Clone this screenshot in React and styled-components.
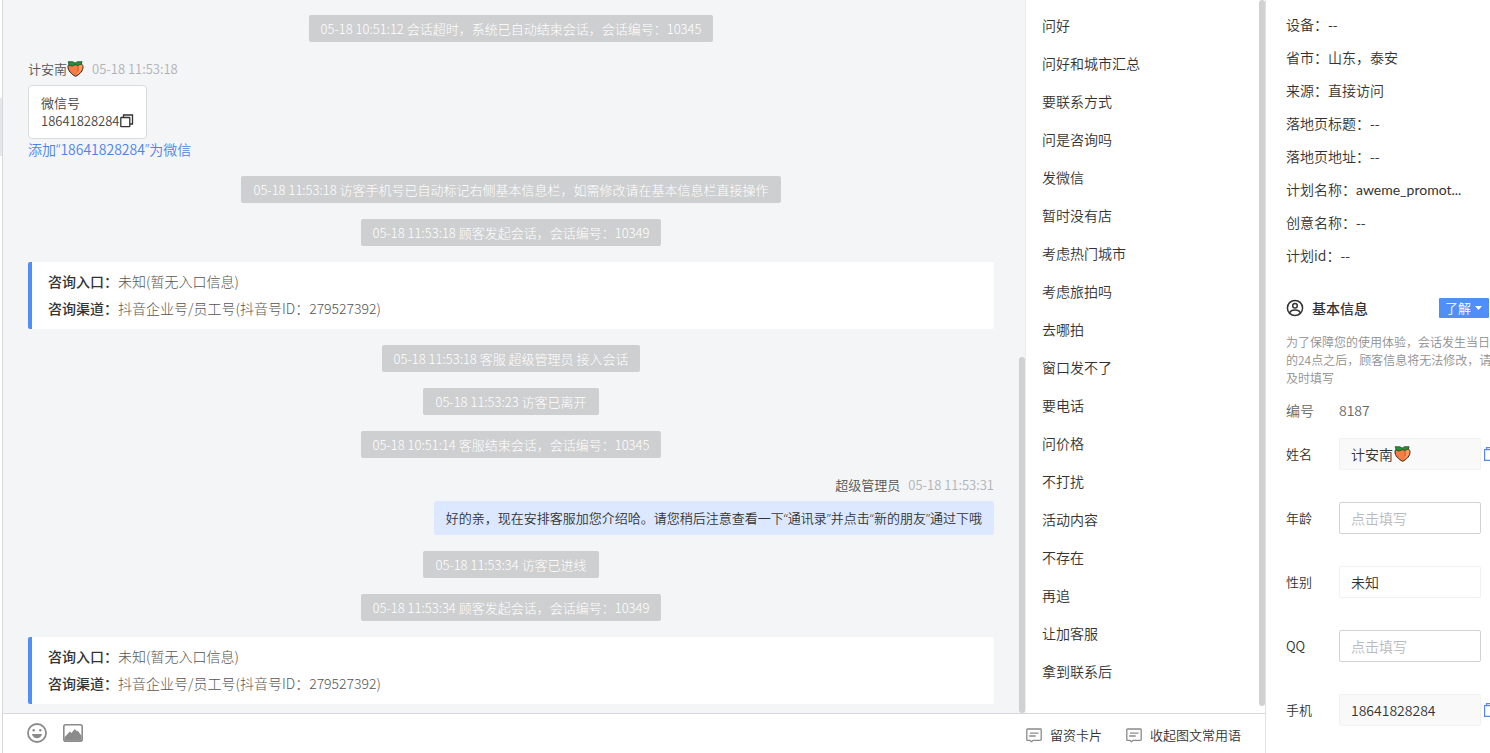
import React from 'react';
import styled, { createGlobalStyle } from 'styled-components';

const GlobalStyle = createGlobalStyle`
    * {
        box-sizing: border-box;
    }
    body {
        margin: 0;
        color: #333;
        font: 350 14px/20px "Noto Sans CJK SC", "Noto Sans", sans-serif;
        background: #fff;
    }
    button, input, select {
        margin: 0;
        padding: 0;
        border: 0;
        color: inherit;
        font: inherit;
        background: none;
    }
    svg {
        display: block;
        flex: none;
    }
`;

const Page = styled.div`
    display: flex;
    height: 100vh;
    overflow: hidden;
`;

const Edge = styled.div`
    flex: none;
    width: 3px;
    padding-top: 98px;
    border-right: 1px solid #d6d8dc;
`;

const EdgeThumb = styled.div`
    height: 58px;
    background: #e6e7e9;
`;

const Main = styled.main`
    flex: 1;
    min-width: 0;
    display: flex;
    flex-direction: column;
`;

const Body = styled.div`
    flex: 1;
    min-height: 0;
    display: flex;
`;

const Chat = styled.section`
    flex: 1;
    min-width: 0;
    display: flex;
    background: #f3f5f7;
`;

const Messages = styled.div`
    flex: 1;
    min-width: 0;
    display: flex;
    flex-direction: column;
    gap: 16px;
    padding: 15px 25px 8px;
    overflow: hidden;
`;

const Track = styled.div`
    flex: none;
    display: flex;
    flex-direction: column;
    justify-content: ${({ $end }) => ($end ? 'flex-end' : 'flex-start')};
    width: 6px;
`;

const Thumb = styled.div`
    height: ${({ $size }) => $size};
    border-radius: 3px;
    background: #d0d1d3;
`;

const Notice = styled.div`
    align-self: center;
    padding: 0 12px;
    border-radius: 2px;
    color: #fff;
    font-size: 13px;
    font-weight: 300;
    line-height: 27px;
    white-space: nowrap;
    background: #cecfd1;
`;

const Message = styled.article`
    display: flex;
    flex-direction: column;
    align-items: ${({ $mine }) => ($mine ? 'flex-end' : 'flex-start')};
`;

const MessageHead = styled.header`
    display: flex;
    align-items: center;
    margin-bottom: 5px;
    color: #555;
    font-size: 13px;
    line-height: 22px;
`;

const Time = styled.time`
    margin-left: 8px;
    color: #b0b2b5;
`;

const ContactBox = styled.div`
    padding: 8px 12px;
    border: 1px solid #d9dbde;
    border-radius: 4px;
    color: #444;
    font-size: 13px;
    line-height: 18px;
    background: #fff;
`;

const ContactNumber = styled.div`
    display: flex;
    align-items: center;
`;

const IconButton = styled.button`
    display: flex;
    flex: none;
    color: ${({ $color }) => $color || '#333'};
    cursor: pointer;
`;

const AddLink = styled.a`
    color: #4a84e8;
    font-size: 14px;
    line-height: 21px;
    text-decoration: none;
`;

const Quote = styled.span`
    font-family: "Noto Sans", sans-serif;
`;

const Bubble = styled.div`
    padding: 0 12px;
    border-radius: 3px;
    font-size: 13px;
    line-height: 34px;
    background: #dbe8ff;
`;

const Source = styled.dl`
    margin: 0;
    padding: 6px 16px 7px;
    border-left: 4px solid #4f8ff7;
    border-radius: 2px;
    background: #fff;
`;

const SourceRow = styled.div`
    display: flex;
    line-height: 27px;

    dt {
        font-weight: 500;
    }
    dd {
        margin: 0;
        color: #555;
        font-weight: 300;
    }
`;

const Phrases = styled.aside`
    flex: none;
    display: flex;
    width: 240px;
    border-left: 1px solid #ebedf0;
`;

const PhraseList = styled.ul`
    flex: 1;
    margin: 0;
    padding: 6px 16px;
    list-style: none;
    overflow: hidden;
`;

const Phrase = styled.button`
    display: block;
    width: 100%;
    line-height: 38px;
    text-align: left;
    cursor: pointer;
`;

const Toolbar = styled.footer`
    flex: none;
    display: flex;
    align-items: center;
    gap: 16px;
    height: 40px;
    padding: 0 24px 2px;
    border-top: 1px solid #d6d8dc;
    background: #fff;
`;

const Actions = styled.div`
    display: flex;
    gap: 24px;
    margin-left: auto;
    padding-top: 5px;
`;

const Action = styled.button`
    display: flex;
    align-items: center;
    gap: 8px;
    font-size: 13px;
    cursor: pointer;
`;

const Info = styled.aside`
    flex: none;
    width: 225px;
    padding: 8px 0 0 20px;
    border-left: 1px solid #e2e3e5;
    overflow: hidden;
`;

const Detail = styled.div`
    line-height: 33px;
    white-space: nowrap;
`;

const Value = styled.span`
    font-family: Lato, "Noto Sans CJK SC", sans-serif;
    font-weight: 400;
`;

const Heading = styled.div`
    display: flex;
    align-items: center;
    height: 20px;
    margin: 26px 1px 15px 0;

    h2 {
        margin: 0 auto 0 8px;
        font-size: 14px;
        font-weight: 500;
    }
`;

const Tag = styled.button`
    display: flex;
    align-items: center;
    gap: 4px;
    height: 20px;
    padding: 0 7px 0 6px;
    border-radius: 1px;
    color: #fff;
    font-size: 13px;
    background: #4f8ff7;
    cursor: pointer;
`;

const Hint = styled.p`
    margin: 0 -4px 11px 0;
    color: #8f8f8f;
    font-size: 12px;
    line-height: 18px;
`;

const Serial = styled.div`
    display: flex;
    margin-bottom: 16px;
    color: #666;
    line-height: 24px;

    span {
        width: 53px;
    }
`;

const Field = styled.div`
    display: flex;
    align-items: center;
    margin-bottom: 32px;
`;

const Label = styled.label`
    flex: none;
    width: 53px;
    font-size: 13px;
`;

const Control = styled.div`
    position: relative;
    flex: none;
    width: 142px;
    margin-right: 3px;

    input, select {
        display: block;
        width: 100%;
        height: 32px;
        padding: 0 11px;
        border: 1px solid ${({ $kind }) => ($kind === 'empty' ? '#d0d2d6' : '#f0f1f3')};
        border-radius: 2px;
        background: ${({ $kind }) => ($kind === 'filled' ? '#f9f9fa' : '#fff')};
        appearance: none;
    }
    input::placeholder {
        color: #b8babd;
    }
`;

const NameEmoji = styled.span`
    position: absolute;
    top: 8px;
    left: 55px;
`;

const Peach = () => (
    <svg width="17" height="16" viewBox="0 0 17 16" role="img" aria-label="peach">
        <path d="M1 5.500C1.200 3.600 2.600 2.600 4.500 2.600h8c2 0 3.400 1.200 3.500 3.200.2 3.800-3.300 7.700-7.300 9.500C4.500 13.500.7 9.400 1 5.500z" fill="#f57c42" stroke="#30231b" strokeWidth="1" />
        <path d="M10.500 3.500c2.200 2.800 1.600 6.800-.8 10 3.300-1.900 5.700-4.700 5.700-7.700 0-1.500-1-2.600-2.600-2.600z" fill="#ff9a5e" />
        <path d="M10.300 4.200c1.300 1.900 1.300 4.300.4 6.300" fill="none" stroke="#c94f28" strokeWidth=".8" />
        <path d="M1.200.7h4.500L8.200 2 10.500.7h4.600l-.7 2.200-3.500 1.600-2.700-.8-3 1.400-3-.9z" fill="#249336" stroke="#163e1b" strokeWidth=".7" strokeLinejoin="round" />
    </svg>
);

const CopyIcon = () => (
    <svg width="14" height="14" viewBox="0 0 14 14" fill="none" stroke="currentColor" strokeWidth="1.3">
        <path d="M3.500 3.200V1h9v9h-2.700" />
        <rect x=".8" y="3.500" width="9" height="9.200" rx=".5" />
    </svg>
);

const ClipboardIcon = () => (
    <svg width="12" height="14" viewBox="0 0 12 14" fill="none" stroke="currentColor" strokeWidth="1.200">
        <path d="M2.500 2.500H.6v10.900h10.800V2.500H9.500" />
        <path d="M2.500 2.600V.7h7v1.900z" />
    </svg>
);

const SmileIcon = () => (
    <svg width="20" height="20" viewBox="0 0 20 20" fill="#8b8b8b">
        <circle cx="10" cy="10" r="9" fill="none" stroke="#8b8b8b" strokeWidth="1.800" />
        <circle cx="6.700" cy="7.300" r="1.200" />
        <circle cx="13.300" cy="7.300" r="1.200" />
        <path d="M5 11h10c-.4 2.500-2.400 4.200-5 4.200S5.400 13.500 5 11z" />
    </svg>
);

const ImageIcon = () => (
    <svg width="20" height="18" viewBox="0 0 20 18">
        <rect x=".8" y=".8" width="18.400" height="16.400" rx="2" fill="#fff" stroke="#8b8b8b" strokeWidth="1.600" />
        <path d="M1.500 13.200 6.800 7.500 8.500 9l3.300-4 2 2.300 1-.6 3.700 5v5h-17z" fill="#8b8b8b" />
    </svg>
);

const CardIcon = () => (
    <svg width="16" height="15" viewBox="0 0 16 15" fill="none" stroke="#8b8b8b" strokeWidth="1.300">
        <path d="M1.600 1h12.800q.8 0 .8.800v9.800q0 .8-.8.800H7l-1.500 1.300L4 12.400H1.600q-.8 0-.8-.8V1.800Q.8 1 1.600 1z" />
        <path d="M4 5.200h8.500M3.200 8h6.500" />
    </svg>
);

const UserIcon = () => (
    <svg width="18" height="18" viewBox="0 0 18 18" fill="none" stroke="#333" strokeWidth="1.500">
        <circle cx="9" cy="9" r="7.600" />
        <circle cx="9" cy="6.800" r="2.300" />
        <path d="M3.500 14c1-2.100 2.800-2.900 5.500-2.900s4.500.8 5.500 2.900" />
    </svg>
);

const phrases = [
    '问好', '问好和城市汇总', '要联系方式', '问是咨询吗', '发微信', '暂时没有店',
    '考虑热门城市', '考虑旅拍吗', '去哪拍', '窗口发不了', '要电话', '问价格',
    '不打扰', '活动内容', '不存在', '再追', '让加客服', '拿到联系后',
];

const details = [
    ['设备', '--'],
    ['省市', '山东，泰安'],
    ['来源', '直接访问'],
    ['落地页标题', '--'],
    ['落地页地址', '--'],
    ['计划名称', 'aweme_promot...', true],
    ['创意名称', '--'],
    ['计划id', '--'],
];

const SourceCard = () => (
    <Source>
        <SourceRow>
            <dt>咨询入口：</dt>
            <dd>未知(暂无入口信息)</dd>
        </SourceRow>
        <SourceRow>
            <dt>咨询渠道：</dt>
            <dd>抖音企业号/员工号(抖音号ID：279527392)</dd>
        </SourceRow>
    </Source>
);

const App = () => {
    return (
        <>
            <GlobalStyle />
            <Page>
                <Edge>
                    <EdgeThumb />
                </Edge>
                <Main>
                    <Body>
                        <Chat>
                            <Messages>
                                <Notice>05-18 10:51:12 会话超时，系统已自动结束会话，会话编号：10345</Notice>
                                <Message>
                                    <MessageHead>
                                        计安南
                                        <Peach />
                                        <Time>05-18 11:53:18</Time>
                                    </MessageHead>
                                    <ContactBox>
                                        微信号
                                        <ContactNumber>
                                            18641828284
                                            <IconButton type="button" aria-label="复制微信号">
                                                <CopyIcon />
                                            </IconButton>
                                        </ContactNumber>
                                    </ContactBox>
                                    <AddLink href="#add">
                                        添加<Quote>“</Quote>18641828284<Quote>”</Quote>为微信
                                    </AddLink>
                                </Message>
                                <Notice>05-18 11:53:18 访客手机号已自动标记右侧基本信息栏，如需修改请在基本信息栏直接操作</Notice>
                                <Notice>05-18 11:53:18 顾客发起会话，会话编号：10349</Notice>
                                <SourceCard />
                                <Notice>05-18 11:53:18 客服 超级管理员 接入会话</Notice>
                                <Notice>05-18 11:53:23 访客已离开</Notice>
                                <Notice>05-18 10:51:14 客服结束会话，会话编号：10345</Notice>
                                <Message $mine>
                                    <MessageHead>
                                        超级管理员
                                        <Time>05-18 11:53:31</Time>
                                    </MessageHead>
                                    <Bubble>
                                        好的亲，现在安排客服加您介绍哈。请您稍后注意查看一下<Quote>“</Quote>通讯录<Quote>”</Quote>并点击<Quote>“</Quote>新的朋友<Quote>”</Quote>通过下哦
                                    </Bubble>
                                </Message>
                                <Notice>05-18 11:53:34 访客已进线</Notice>
                                <Notice>05-18 11:53:34 顾客发起会话，会话编号：10349</Notice>
                                <SourceCard />
                            </Messages>
                            <Track $end>
                                <Thumb $size="50%" />
                            </Track>
                        </Chat>
                        <Phrases>
                            <PhraseList>
                                {phrases.map((text) => (
                                    <li key={text}>
                                        <Phrase type="button">{text}</Phrase>
                                    </li>
                                ))}
                            </PhraseList>
                            <Track>
                                <Thumb $size="99%" />
                            </Track>
                        </Phrases>
                    </Body>
                    <Toolbar>
                        <IconButton type="button" aria-label="表情">
                            <SmileIcon />
                        </IconButton>
                        <IconButton type="button" aria-label="图片">
                            <ImageIcon />
                        </IconButton>
                        <Actions>
                            <Action type="button">
                                <CardIcon />
                                留资卡片
                            </Action>
                            <Action type="button">
                                <CardIcon />
                                收起图文常用语
                            </Action>
                        </Actions>
                    </Toolbar>
                </Main>
                <Info>
                    {details.map(([name, value, latin]) => (
                        <Detail key={name}>{name}：{latin ? <Value>{value}</Value> : value}</Detail>
                    ))}
                    <Heading>
                        <UserIcon />
                        <h2>基本信息</h2>
                        <Tag type="button">
                            了解
                            <svg width="7" height="4" viewBox="0 0 7 4" fill="#fff">
                                <path d="M0 0h7L3.500 4z" />
                            </svg>
                        </Tag>
                    </Heading>
                    <Hint>为了保障您的使用体验，会话发生当日的24点之后，顾客信息将无法修改，请及时填写</Hint>
                    <Serial>
                        <span>编号</span>
                        8187
                    </Serial>
                    <Field>
                        <Label htmlFor="name">姓名</Label>
                        <Control $kind="filled">
                            <input id="name" defaultValue="计安南" />
                            <NameEmoji>
                                <Peach />
                            </NameEmoji>
                        </Control>
                        <IconButton type="button" $color="#5b86e5" aria-label="复制姓名">
                            <ClipboardIcon />
                        </IconButton>
                    </Field>
                    <Field>
                        <Label htmlFor="age">年龄</Label>
                        <Control $kind="empty">
                            <input id="age" placeholder="点击填写" />
                        </Control>
                    </Field>
                    <Field>
                        <Label htmlFor="gender">性别</Label>
                        <Control $kind="select">
                            <select id="gender" defaultValue="未知">
                                <option>未知</option>
                            </select>
                        </Control>
                    </Field>
                    <Field>
                        <Label htmlFor="qq">QQ</Label>
                        <Control $kind="empty">
                            <input id="qq" placeholder="点击填写" />
                        </Control>
                    </Field>
                    <Field>
                        <Label htmlFor="phone">手机</Label>
                        <Control $kind="filled">
                            <input id="phone" defaultValue="18641828284" />
                        </Control>
                        <IconButton type="button" $color="#5b86e5" aria-label="复制手机">
                            <ClipboardIcon />
                        </IconButton>
                    </Field>
                </Info>
            </Page>
        </>
    );
};

export default App;
